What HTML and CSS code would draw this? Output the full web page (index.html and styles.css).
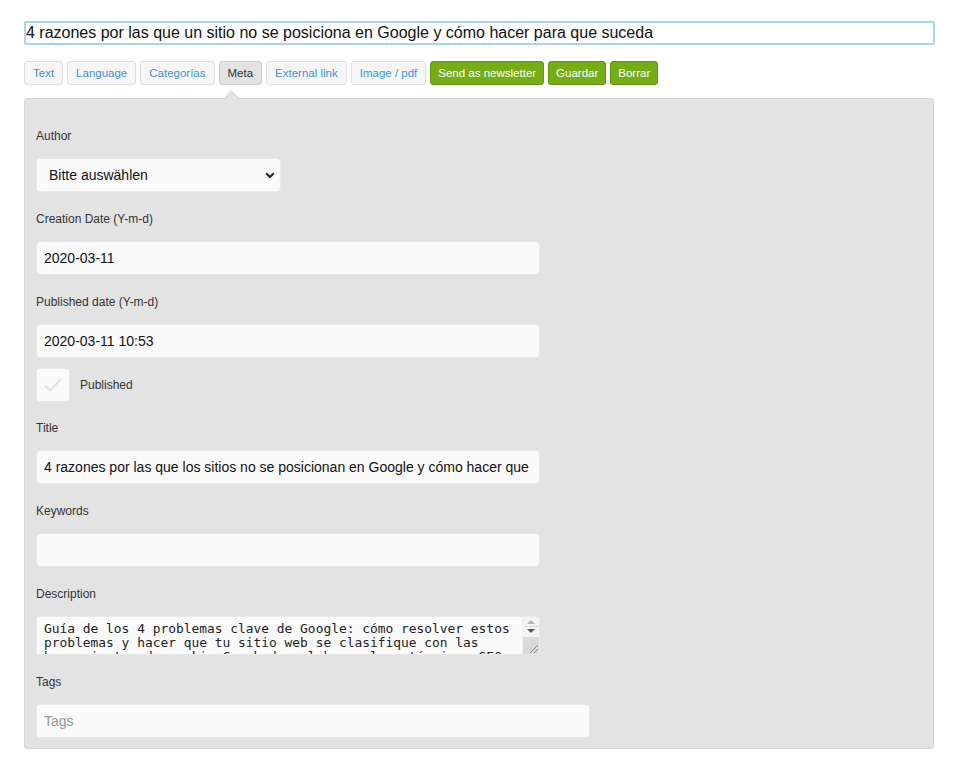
FILE: index.html
```html
<!DOCTYPE html>
<html lang="es">
<head>
<meta charset="utf-8">
<title>Editor</title>
<link rel="stylesheet" href="styles.css">
</head>
<body>
<div class="page">
  <input class="headline" type="text" value="4 razones por las que un sitio no se posiciona en Google y cómo hacer para que suceda">

  <div class="toolbar">
    <button class="tab">Text</button>
    <button class="tab">Language</button>
    <button class="tab">Categorías</button>
    <button class="tab active">Meta</button>
    <button class="tab">External link</button>
    <button class="tab">Image / pdf</button>
    <button class="action">Send as newsletter</button>
    <button class="action">Guardar</button>
    <button class="action">Borrar</button>
  </div>

  <div class="panel">
    <div class="field">
      <label class="label">Author</label>
      <div class="select-wrap">
        <select class="select">
          <option>Bitte auswählen</option>
        </select>
        <svg class="chevron" width="10" height="7" viewBox="0 0 10 7"><path d="M1.2 1.3 L5 5 L8.8 1.3" fill="none" stroke="#222" stroke-width="2"/></svg>
      </div>
    </div>

    <div class="field">
      <label class="label">Creation Date (Y-m-d)</label>
      <input class="input" type="text" value="2020-03-11">
    </div>

    <div class="field tight">
      <label class="label">Published date (Y-m-d)</label>
      <input class="input" type="text" value="2020-03-11 10:53">
    </div>

    <div class="check-row">
      <span class="checkbox">
        <svg width="20" height="16" viewBox="0 0 20 16"><path d="M2 8.5 L7 13.5 L18 2" fill="none" stroke="#dcdcdc" stroke-width="1.6"/></svg>
      </span>
      <span class="check-label">Published</span>
    </div>

    <div class="field">
      <label class="label">Title</label>
      <input class="input" type="text" value="4 razones por las que los sitios no se posicionan en Google y cómo hacer que sucedan">
    </div>

    <div class="field">
      <label class="label">Keywords</label>
      <input class="input" type="text" value="">
    </div>

    <div class="field">
      <label class="label">Description</label>
      <div class="textarea-box">
        <textarea class="textarea">Guía de los 4 problemas clave de Google: cómo resolver estos problemas y hacer que tu sitio web se clasifique con las herramientas de rankingCoach de palabras clave técnicas SEO.</textarea>
        <div class="scrollbar">
          <span class="arrow up"></span>
          <span class="sep"></span>
          <span class="arrow down"></span>
          <span class="track">
            <svg class="grip" width="12" height="12" viewBox="0 0 12 12"><path d="M11 3 L3 11 M11 7 L7 11" stroke="#8a8a8a" stroke-width="1"/></svg>
          </span>
        </div>
      </div>
    </div>

    <div class="field last">
      <label class="label">Tags</label>
      <input class="input wide" type="text" placeholder="Tags">
    </div>
  </div>
</div>
</body>
</html>
```

FILE: styles.css
```css
* { box-sizing: border-box; }

html, body {
  margin: 0;
  padding: 0;
  background: #fff;
  font-family: "Liberation Sans", Arial, sans-serif;
  color: #333;
}

.page {
  width: 911px;
  margin-left: 24px;
  padding-top: 21px;
}

.headline {
  display: block;
  width: 911px;
  height: 24px;
  padding: 0;
  border: 2px solid #a9d3f3;
  border-radius: 2px;
  font-family: "Liberation Sans", Arial, sans-serif;
  font-size: 16px;
  color: #111;
  background: #fff;
  outline: none;
}

.toolbar {
  display: flex;
  gap: 4px;
  margin-top: 16px;
}

.tab, .action {
  height: 24px;
  padding: 0 8px;
  font-family: "Liberation Sans", Arial, sans-serif;
  font-size: 11.5px;
  border-radius: 3px;
  cursor: pointer;
}

.tab {
  background: #f6f6f6;
  border: 1px solid #dedede;
  color: #3a93dc;
}

.tab.active {
  background: #e2e2e2;
  border-color: #cfcfcf;
  color: #333;
}

.action {
  padding: 0 7px;
  background: #74ad18;
  border: 1px solid #5f9910;
  color: #fff;
}

.panel {
  position: relative;
  width: 910px;
  margin-top: 13px;
  padding: 30px 11px 10px 11px;
  background: #e3e3e3;
  border: 1px solid #d6d6d6;
  border-radius: 3px;
}

.panel::before {
  content: "";
  position: absolute;
  left: 201px;
  top: -6px;
  width: 10px;
  height: 10px;
  background: #e3e3e3;
  border-top: 1px solid #d6d6d6;
  border-left: 1px solid #d6d6d6;
  transform: rotate(45deg);
}

.field {
  margin-bottom: 20px;
}

.field.tight {
  margin-bottom: 10px;
}

.field.last {
  margin-bottom: 0;
}

.label {
  display: block;
  font-size: 12px;
  line-height: 14px;
  color: #333;
  margin-bottom: 15px;
}

.select-wrap {
  position: relative;
  width: 245px;
  height: 34px;
}

.select {
  display: block;
  width: 245px;
  height: 34px;
  padding: 0 12px;
  appearance: none;
  -webkit-appearance: none;
  background: #fafafa;
  border: 1px solid #e9e9e9;
  border-radius: 4px;
  font-family: "Liberation Sans", Arial, sans-serif;
  font-size: 14px;
  color: #111;
}

.chevron {
  position: absolute;
  right: 6px;
  top: 14px;
}

.input {
  display: block;
  width: 504px;
  height: 34px;
  padding: 0 7px;
  background: #fafafa;
  border: 1px solid #e9e9e9;
  border-radius: 4px;
  font-family: "Liberation Sans", Arial, sans-serif;
  font-size: 14px;
  color: #111;
  outline: none;
}

.input.wide {
  width: 554px;
}

.input::placeholder {
  color: #999;
}

.check-row {
  display: flex;
  align-items: center;
  gap: 10px;
  margin-bottom: 19px;
}

.checkbox {
  display: flex;
  align-items: center;
  justify-content: center;
  width: 34px;
  height: 34px;
  background: #fafafa;
  border: 1px solid #e9e9e9;
  border-radius: 4px;
}

.check-label {
  font-size: 12px;
  color: #333;
}

.textarea-box {
  display: flex;
  width: 504px;
  height: 39px;
  background: #fafafa;
  border: 1px solid #e9e9e9;
  border-radius: 3px;
  overflow: hidden;
}

.textarea {
  flex: 1;
  height: 100%;
  padding: 5px 0 0 7px;
  border: none;
  background: transparent;
  resize: none;
  overflow: hidden;
  font-family: "DejaVu Sans Mono", "Liberation Mono", monospace;
  font-size: 12.9px;
  line-height: 14px;
  color: #222;
  outline: none;
}

.scrollbar {
  display: flex;
  flex-direction: column;
  align-items: center;
  width: 17px;
  background: #f3f3f3;
  border-left: 1px solid #f0f0f0;
}

.arrow {
  width: 0;
  height: 0;
  border-left: 4px solid transparent;
  border-right: 4px solid transparent;
}

.arrow.up {
  margin-top: 3px;
  border-bottom: 4px solid #b4b4b4;
}

.sep {
  width: 13px;
  height: 1px;
  background: #d6d6d6;
  margin: 2px 0 2px;
}

.arrow.down {
  border-top: 4px solid #555;
}

.track {
  position: relative;
  flex: 1;
  align-self: stretch;
  margin-top: 4px;
  background: #dadada;
}

.grip {
  position: absolute;
  right: 0;
  bottom: 0;
}
```
